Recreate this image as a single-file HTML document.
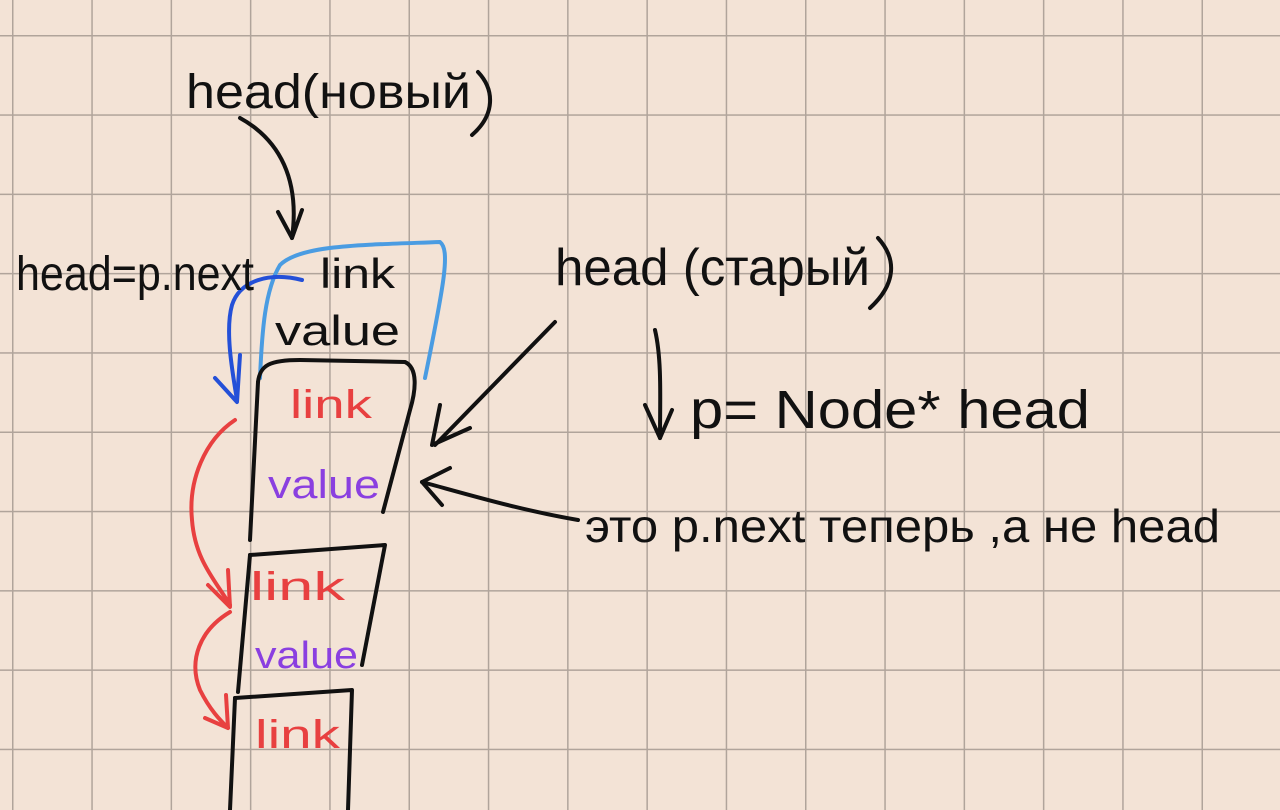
<!DOCTYPE html>
<html><head><meta charset="utf-8"><style>
html,body{margin:0;padding:0}
body{width:1280px;height:810px;overflow:hidden;background:#f3e3d6}
svg{display:block}
text{font-family:"Liberation Sans","DejaVu Sans",sans-serif;font-weight:normal}
</style></head><body>
<svg width="1280" height="810" viewBox="0 0 1280 810" xmlns="http://www.w3.org/2000/svg">
<defs>
<pattern id="g" x="12" y="35" width="79.3" height="79.3" patternUnits="userSpaceOnUse">
<path d="M0 0V79.3M0 0H79.3" stroke="#b0a49b" stroke-width="3" fill="none"/>
</pattern>
</defs>
<rect width="1280" height="810" fill="url(#g)"/>
<g fill="none" stroke-linecap="round" stroke-linejoin="round" stroke-width="4">
<path d="M240 118 C280 140 300 180 292 238" stroke="#111"/>
<path d="M278 212 L292 238 L302 210" stroke="#111"/>
<path d="M260 378 C262 330 265 290 280 265 C300 245 360 245 440 242 C450 250 445 280 425 378" stroke="#4a9ce2"/>
<path d="M302 280 C270 272 240 280 232 305 C225 330 232 370 237 400" stroke="#2450d8"/>
<path d="M215 378 L237 402 L240 355" stroke="#2450d8"/>
<path d="M258 382 C260 365 270 360 300 360 L405 362 C418 368 416 390 410 410 L383 512" stroke="#111"/>
<path d="M258 382 L250 540" stroke="#111"/>
<path d="M250 555 L385 545 L362 665" stroke="#111"/>
<path d="M250 555 L238 692" stroke="#111"/>
<path d="M235 698 L352 690 L348 810" stroke="#111"/>
<path d="M235 698 L230 810" stroke="#111"/>
<path d="M235 420 C205 440 188 480 192 520 C195 560 215 580 230 605" stroke="#e84040"/>
<path d="M208 585 L230 607 L228 570" stroke="#e84040"/>
<path d="M230 612 C200 630 188 660 200 690 C210 710 220 720 228 728" stroke="#e84040"/>
<path d="M205 718 L228 728 L226 695" stroke="#e84040"/>
<path d="M555 322 L435 445" stroke="#111"/>
<path d="M440 405 L432 445 L470 428" stroke="#111"/>
<path d="M655 330 C662 360 660 400 660 438" stroke="#111"/>
<path d="M645 405 L660 438 L672 410" stroke="#111"/>
<path d="M578 520 C520 510 470 495 422 482" stroke="#111"/>
<path d="M450 468 L422 482 L442 505" stroke="#111"/>
<path d="M478 72 C495 90 495 115 472 135" stroke="#111"/>
<path d="M878 238 C898 260 895 285 870 308" stroke="#111"/>
</g>
<g fill="#111">
<text x="186" y="108" font-size="48" textLength="285" lengthAdjust="spacingAndGlyphs">head(новый</text>
<text x="16" y="290" font-size="48" textLength="238" lengthAdjust="spacingAndGlyphs">head=p.next</text>
<text x="320" y="288" font-size="42" textLength="75" lengthAdjust="spacingAndGlyphs">link</text>
<text x="275" y="345" font-size="42" textLength="125" lengthAdjust="spacingAndGlyphs">value</text>
<text x="555" y="285" font-size="52" textLength="315" lengthAdjust="spacingAndGlyphs">head (старый</text>
<text x="690" y="428" font-size="54" textLength="400" lengthAdjust="spacingAndGlyphs">p= Node* head</text>
<text x="585" y="542" font-size="46" textLength="635" lengthAdjust="spacingAndGlyphs">это p.next теперь ,а не head</text>
</g>
<g fill="#e84040">
<text x="290" y="418" font-size="40" textLength="82" lengthAdjust="spacingAndGlyphs">link</text>
<text x="250" y="600" font-size="40" textLength="95" lengthAdjust="spacingAndGlyphs">link</text>
<text x="255" y="748" font-size="40" textLength="85" lengthAdjust="spacingAndGlyphs">link</text>
</g>
<g fill="#8a3fe0">
<text x="268" y="498" font-size="40" textLength="112" lengthAdjust="spacingAndGlyphs">value</text>
<text x="255" y="668" font-size="38" textLength="103" lengthAdjust="spacingAndGlyphs">value</text>
</g>
</svg>
</body></html>
